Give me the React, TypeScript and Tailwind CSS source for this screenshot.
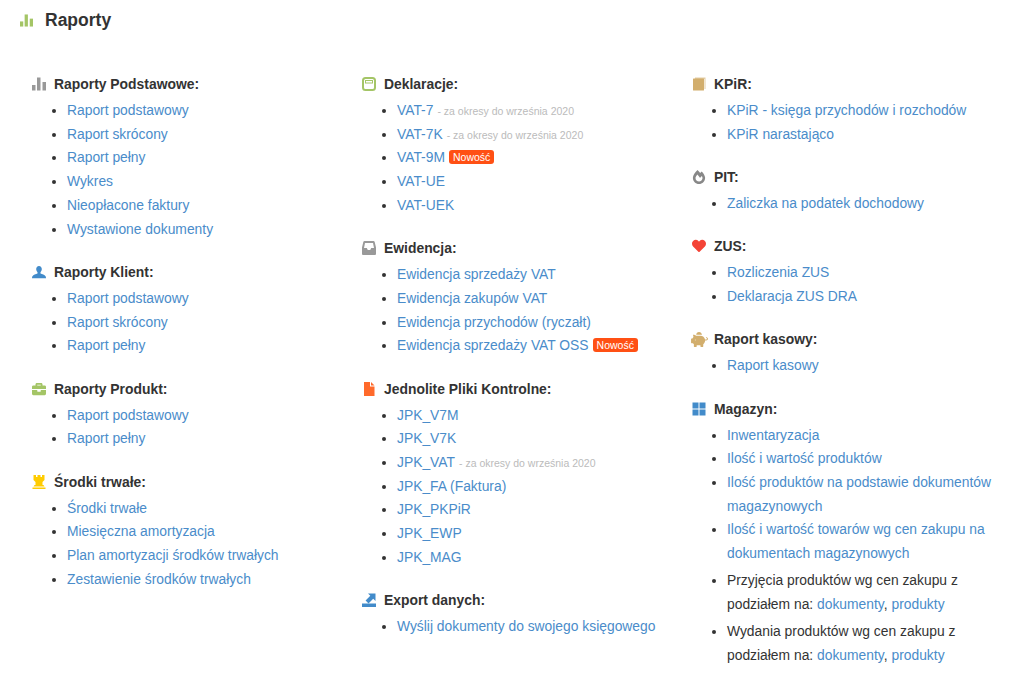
import React from "react";
import { FaBriefcase, FaFireAlt, FaHeart, FaPiggyBank } from "react-icons/fa";

const Bars = ({ className }: { className: string }) => (
  <svg viewBox="0 0 14 14" className={className} fill="currentColor">
    <rect x="0" y="8" width="3.5" height="5.500" />
    <rect x="5" y="0.500" width="3.500" height="13" />
    <rect x="10.500" y="5" width="3.500" height="8.500" />
  </svg>
);

const UserIcon = ({ className }: { className: string }) => (
  <svg viewBox="0 0 16 14" className={className} fill="currentColor">
    <path d="M8 0c2 0 3.200 1.500 3.200 3.600 0 1.500-.6 2.900-1.500 3.700v1.300c1.900.6 4.800 1.500 5.800 3.200.3.600.5 1.200.5 2.200H0c0-1 .2-1.600.5-2.200 1-1.700 3.900-2.600 5.800-3.200V7.300C5.400 6.500 4.800 5.100 4.800 3.600 4.800 1.500 6 0 8 0z" />
  </svg>
);

const TowerIcon = ({ className }: { className: string }) => (
  <svg viewBox="0 0 14 14" className={className} fill="currentColor">
    <path d="M1.500 0h2.500v2h1.500V0h3v2H10V0h2.500v5L10.500 7v3h1l1 1.500h-11l1-1.500h1V7L1.500 5z" />
    <rect x="0.500" y="12.500" width="13" height="1.500" />
  </svg>
);

const DeclarationIcon = ({ className }: { className: string }) => (
  <svg viewBox="0 0 14 14" className={className} fill="none">
    <rect x="1" y="1" width="12" height="12" rx="2.500" stroke="currentColor" strokeWidth="2" />
    <rect x="3.500" y="3.500" width="7" height="2.500" stroke="currentColor" strokeWidth="1" />
  </svg>
);

const InboxIcon = ({ className }: { className: string }) => (
  <svg viewBox="0 0 14 14" className={className} fill="currentColor">
    <path d="M2.500 0h9c.6 0 1 .3 1.200.9L14 6.500v6.200c0 .8-.5 1.300-1.300 1.300H1.300C.5 14 0 13.500 0 12.700V6.500L1.300.9C1.500.3 1.900 0 2.500 0zM3 2 2 7h2.800l1 2h2.400l1-2H12l-1-5z" fillRule="evenodd" />
  </svg>
);

const FileIcon = ({ className }: { className: string }) => (
  <svg viewBox="0 0 14 14" className={className} fill="currentColor">
    <path d="M2 0h6v4.500h4.500V14H2z" />
    <path d="M9 0l3.500 3.500H9z" />
  </svg>
);

const ExportIcon = ({ className }: { className: string }) => (
  <svg viewBox="0 0 14 14" className={className} fill="currentColor">
    <path d="M6 .5h7.500V8l-2.300-2.300L6.500 10.400 3.600 7.500l4.700-4.700z" />
    <rect x="0" y="10.500" width="14" height="3.500" />
  </svg>
);

const BookIcon = ({ className }: { className: string }) => (
  <svg viewBox="0 0 14 14" className={className} fill="currentColor">
    <path d="M3 .5h10.500v11.500h-1V2H3z" opacity="0.600" />
    <rect x="1" y="1.500" width="11" height="12" rx="0.500" />
  </svg>
);

const GridIcon = ({ className }: { className: string }) => (
  <svg viewBox="0 0 14 14" className={className} fill="currentColor">
    <rect x="0.500" y="0.500" width="6" height="6" />
    <rect x="7.500" y="0.500" width="6" height="6" />
    <rect x="0.500" y="7.500" width="6" height="6" />
    <rect x="7.500" y="7.500" width="6" height="6" />
  </svg>
);

const Link = ({ children }: { children: React.ReactNode }) => (
  <a href="#" className="text-[#4a8cca]">{children}</a>
);

const Note = () => (
  <span className="ml-1 text-[10.5px] leading-none text-[#bbbbbb]">- za okresy do września 2020</span>
);

const New = () => (
  <span className="ml-1 inline-block h-[14px] rounded-[3px] bg-[#ff5014] px-[4px] align-[1px] text-[10.5px] leading-[14px] font-medium text-white">Nowość</span>
);

type Item = { label: string; extra?: "note" | "new" };
type Group = { title: string; icon: React.ReactNode; items: Item[] };

const items = (...labels: string[]): Item[] => labels.map((label) => ({ label }));

const iconCls = "h-[14px] w-[14px]";

const col1: Group[] = [
  {
    title: "Raporty Podstawowe:",
    icon: <Bars className={`${iconCls} text-[#999999]`} />,
    items: items("Raport podstawowy", "Raport skrócony", "Raport pełny", "Wykres", "Nieopłacone faktury", "Wystawione dokumenty"),
  },
  {
    title: "Raporty Klient:",
    icon: <UserIcon className={`${iconCls} text-[#428bca]`} />,
    items: items("Raport podstawowy", "Raport skrócony", "Raport pełny"),
  },
  {
    title: "Raporty Produkt:",
    icon: <FaBriefcase className={`${iconCls} text-[#a4c566]`} />,
    items: items("Raport podstawowy", "Raport pełny"),
  },
  {
    title: "Środki trwałe:",
    icon: <TowerIcon className={`${iconCls} text-[#ffcc00]`} />,
    items: items("Środki trwałe", "Miesięczna amortyzacja", "Plan amortyzacji środków trwałych", "Zestawienie środków trwałych"),
  },
];

const col2: Group[] = [
  {
    title: "Deklaracje:",
    icon: <DeclarationIcon className={`${iconCls} text-[#a4c566]`} />,
    items: [
      { label: "VAT-7", extra: "note" },
      { label: "VAT-7K", extra: "note" },
      { label: "VAT-9M", extra: "new" },
      { label: "VAT-UE" },
      { label: "VAT-UEK" },
    ],
  },
  {
    title: "Ewidencja:",
    icon: <InboxIcon className={`${iconCls} text-[#999999]`} />,
    items: [
      { label: "Ewidencja sprzedaży VAT" },
      { label: "Ewidencja zakupów VAT" },
      { label: "Ewidencja przychodów (ryczałt)" },
      { label: "Ewidencja sprzedaży VAT OSS", extra: "new" },
    ],
  },
  {
    title: "Jednolite Pliki Kontrolne:",
    icon: <FileIcon className={`${iconCls} text-[#ff6a2b]`} />,
    items: [
      { label: "JPK_V7M" },
      { label: "JPK_V7K" },
      { label: "JPK_VAT", extra: "note" },
      { label: "JPK_FA (Faktura)" },
      { label: "JPK_PKPiR" },
      { label: "JPK_EWP" },
      { label: "JPK_MAG" },
    ],
  },
  {
    title: "Export danych:",
    icon: <ExportIcon className={`${iconCls} text-[#428bca]`} />,
    items: items("Wyślij dokumenty do swojego księgowego"),
  },
];

const col3: Group[] = [
  {
    title: "KPiR:",
    icon: <BookIcon className={`${iconCls} text-[#d2ae6d]`} />,
    items: items("KPiR - księga przychodów i rozchodów", "KPiR narastająco"),
  },
  {
    title: "PIT:",
    icon: <FaFireAlt className={`${iconCls} text-[#888888]`} />,
    items: items("Zaliczka na podatek dochodowy"),
  },
  {
    title: "ZUS:",
    icon: <FaHeart className={`${iconCls} text-[#f44336]`} />,
    items: items("Rozliczenia ZUS", "Deklaracja ZUS DRA"),
  },
  {
    title: "Raport kasowy:",
    icon: <FaPiggyBank className="-ml-px h-[15px] w-[17px] -scale-x-100 text-[#d2ae6d]" />,
    items: items("Raport kasowy"),
  },
];

const Heading = ({ group }: { group: Pick<Group, "title" | "icon"> }) => (
  <h3 className="mb-[3px] flex h-6 items-center text-[13.9px] leading-6 font-bold">
    <span className="flex w-[22px] shrink-0 items-center">{group.icon}</span>
    {group.title}
  </h3>
);

const Section = ({ group }: { group: Group }) => (
  <section className="mb-[18.6px]">
    <Heading group={group} />
    <ul className="list-disc pl-[35px]">
      {group.items.map((item) => (
        <li key={item.label}>
          <Link>{item.label}</Link>
          {item.extra === "note" && <Note />}
          {item.extra === "new" && <New />}
        </li>
      ))}
    </ul>
  </section>
);

export default function App() {
  return (
    <div className="min-h-[673px] overflow-hidden bg-white font-['Liberation_Sans',Arial,sans-serif] text-[13.85px] leading-[23.7px] text-[#333333]">
      <header className="flex h-[41px] items-center pl-[20px]">
        <Bars className="h-[13px] w-[13px] text-[#a4c566]" />
        <h1 className="ml-[12px] text-[17.5px] font-bold">Raporty</h1>
      </header>
      <main className="grid grid-cols-[330px_330px_330px] pt-[31px] pl-[32px]">
        <div>
          {col1.map((g) => <Section key={g.title} group={g} />)}
        </div>
        <div>
          {col2.map((g) => <Section key={g.title} group={g} />)}
        </div>
        <div>
          {col3.map((g) => <Section key={g.title} group={g} />)}
          <section className="mt-[2px]">
            <Heading group={{ title: "Magazyn:", icon: <GridIcon className={`${iconCls} text-[#428bca]`} /> }} />
            <ul className="list-disc pr-[24px] pl-[35px]">
              <li><Link>Inwentaryzacja</Link></li>
              <li><Link>Ilość i wartość produktów</Link></li>
              <li><Link>Ilość produktów na podstawie dokumentów magazynowych</Link></li>
              <li><Link>Ilość i wartość towarów wg cen zakupu na dokumentach magazynowych</Link></li>
              <li className="mt-[3px]">Przyjęcia produktów wg cen zakupu z podziałem na: <Link>dokumenty</Link>, <Link>produkty</Link></li>
              <li className="mt-1">Wydania produktów wg cen zakupu z podziałem na: <Link>dokumenty</Link>, <Link>produkty</Link></li>
            </ul>
          </section>
        </div>
      </main>
    </div>
  );
}
